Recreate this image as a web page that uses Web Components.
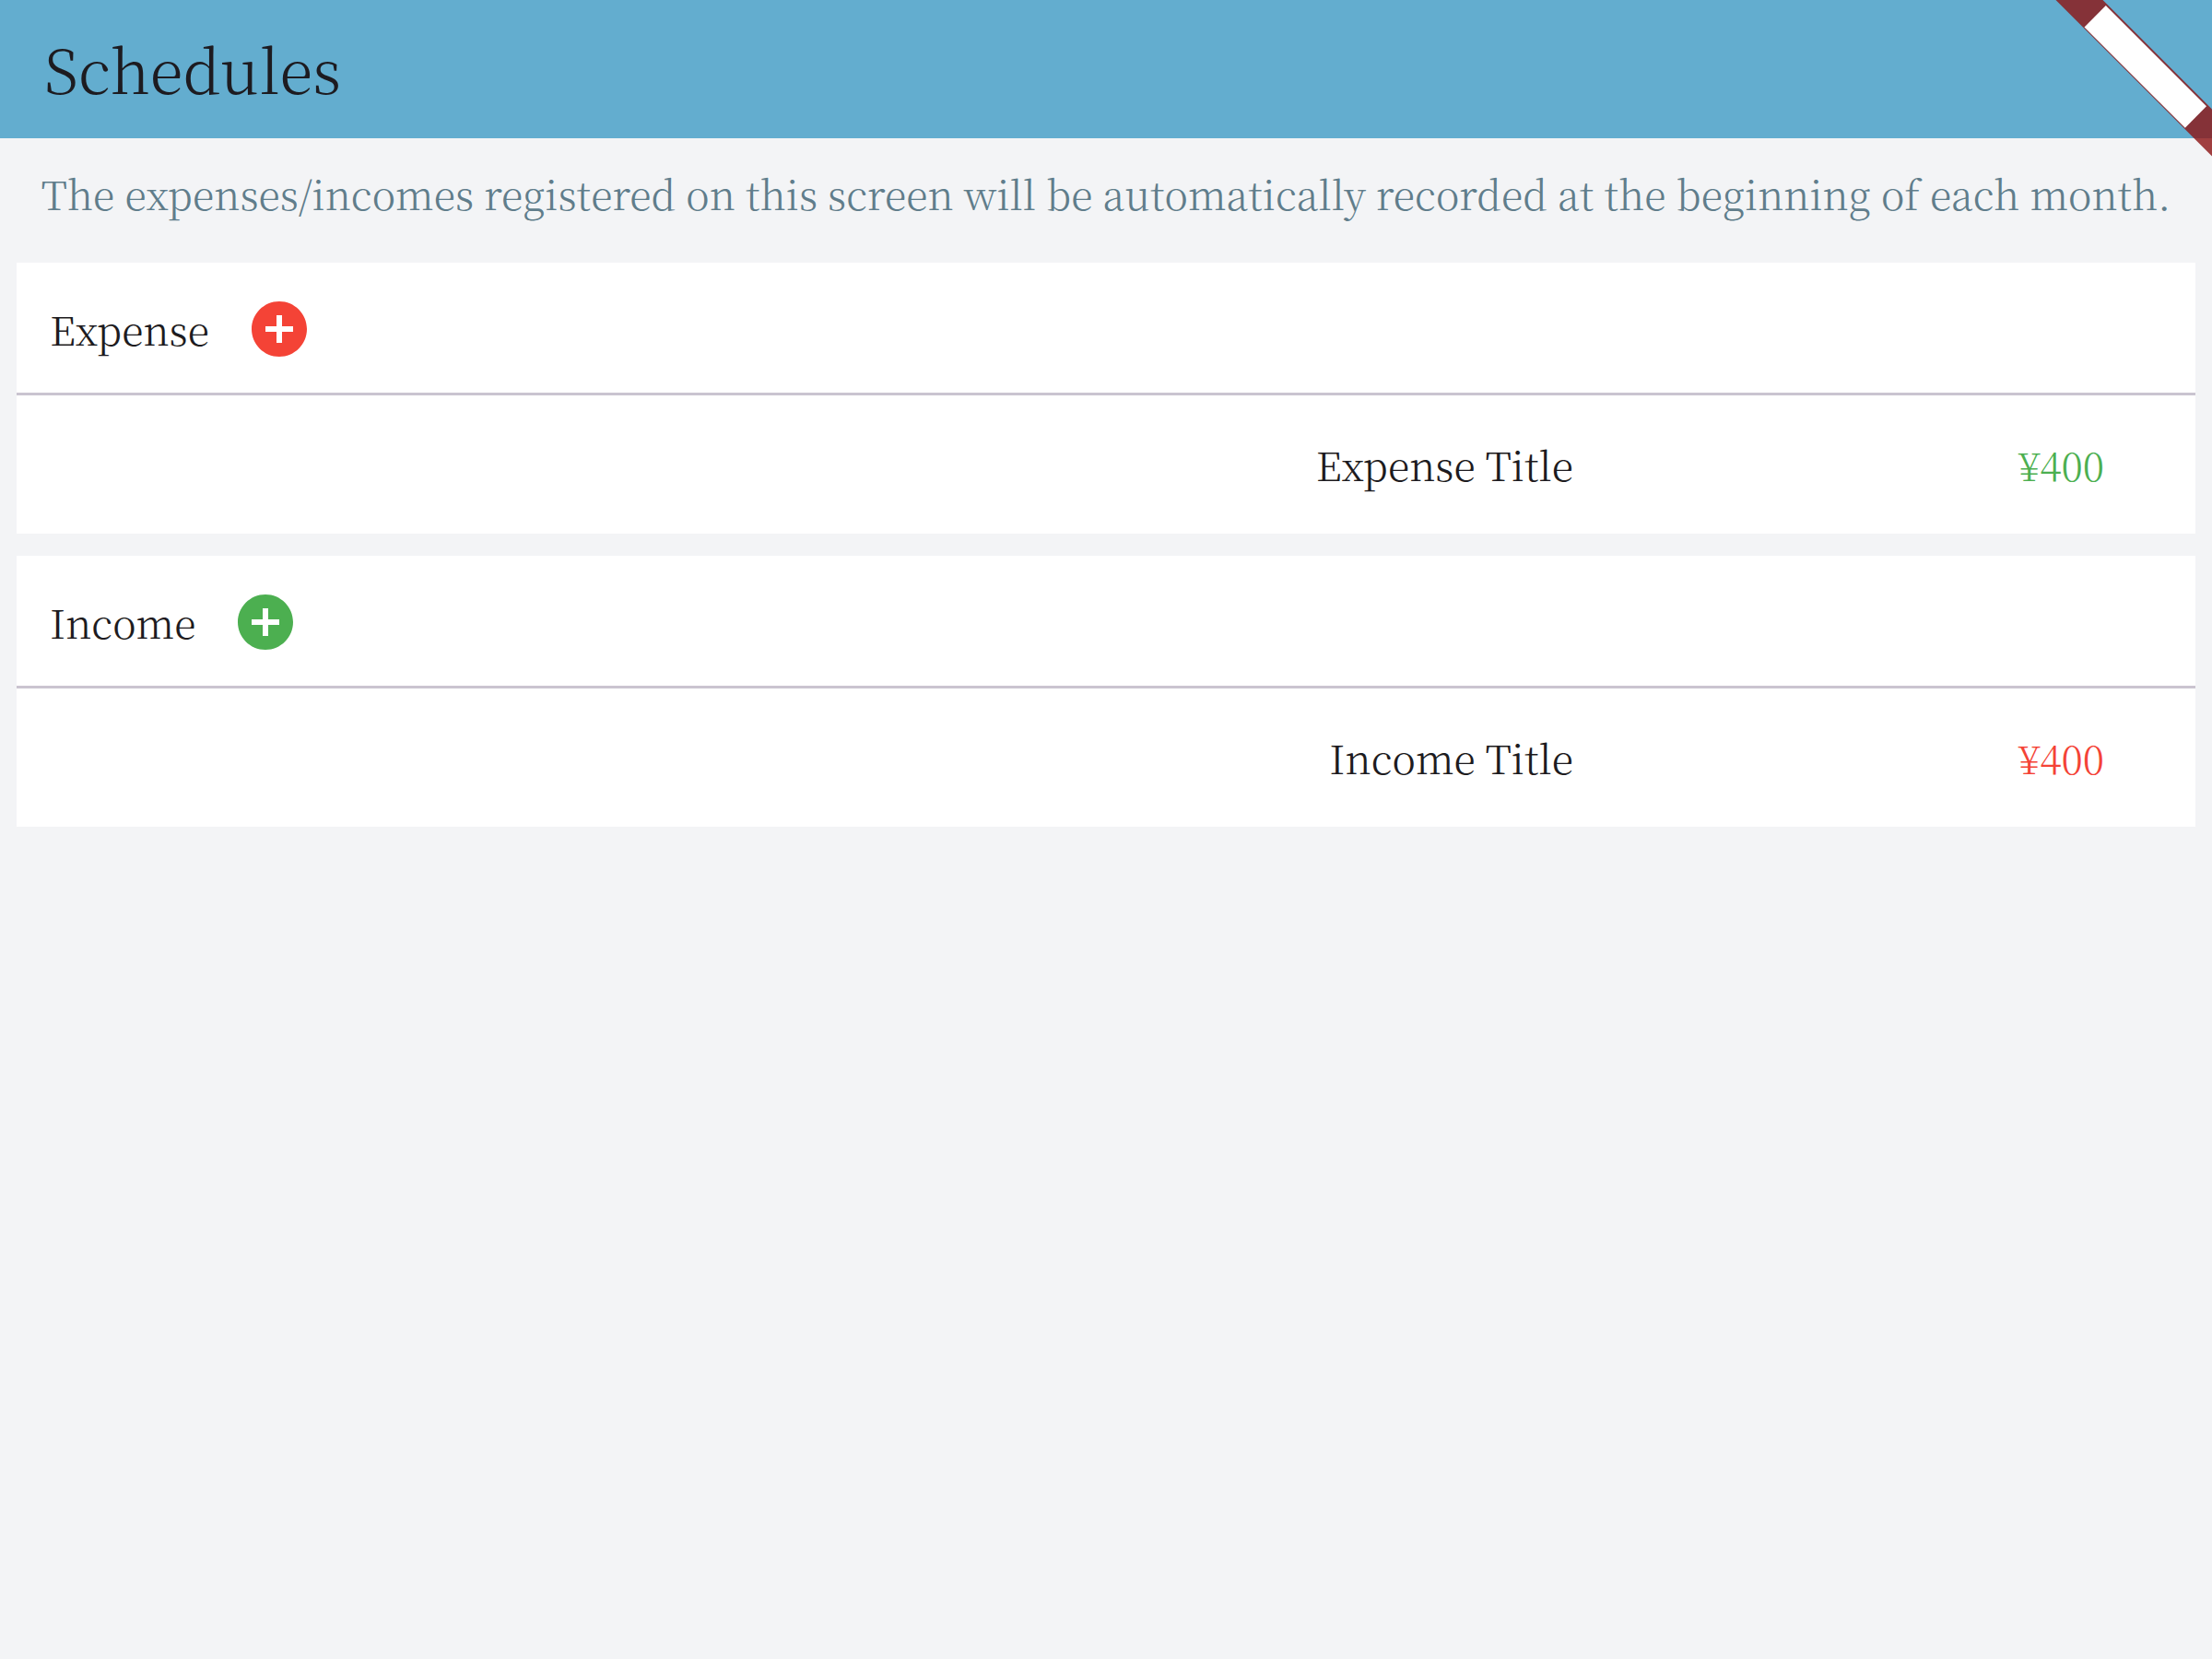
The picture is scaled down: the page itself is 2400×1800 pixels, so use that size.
<!DOCTYPE html>
<html lang="en">
<head>
<meta charset="utf-8">
<meta name="viewport" content="width=device-width, initial-scale=1">
<title>Schedules</title>
<style>
  html, body { margin: 0; min-height: 100%; background: #f3f4f6; }
  body {
    color: #1d1b20;
    font-family: "Noto Serif CJK JP", "Noto Serif JP", "Source Serif 4", "Liberation Serif", serif;
    font-size: 43px;
    font-weight: 300;
    line-height: 72px;
  }
</style>
</head>
<body>
<schedule-page>
  <app-bar slot="bar">Schedules</app-bar>
  <span slot="note">The expenses/incomes registered on this screen will be automatically recorded at the beginning of each month.</span>
  <schedule-card label="Expense" style="--accent:#f44336">
    <schedule-row style="--amount:#4caf50">Expense Title<span slot="amount">¥400</span></schedule-row>
  </schedule-card>
  <schedule-card label="Income" style="--accent:#4caf50">
    <schedule-row style="--amount:#f44336">Income Title<span slot="amount">¥400</span></schedule-row>
  </schedule-card>
</schedule-page>
<script>
  class BaseElement extends HTMLElement {
    constructor() {
      super();
      this.attachShadow({ mode: "open" }).innerHTML = this.constructor.markup;
    }
  }

  customElements.define("corner-ribbon", class extends BaseElement {
    static markup = `
      <style>
        :host { display: block; position: absolute; top: 0; right: 0; pointer-events: none; }
        svg { display: block; }
      </style>
      <svg width="180" height="180" viewBox="0 0 180 180" aria-hidden="true">
        <path d="M10.5 0H61.5L180 118.5V169.5Z" fill="rgb(141,22,22)" fill-opacity=".814"/>
        <path d="M64.8 6L174 115.3L150.8 138.8L41.5 29.5Z" fill="#fff"/>
      </svg>`;
  });

  customElements.define("app-bar", class extends BaseElement {
    static markup = `
      <style>
        :host { display: block; background: #63adcf; padding: 29px 48px 31px; }
        h1 { margin: 0; font-size: 66px; line-height: 90px; font-weight: inherit; }
      </style>
      <h1><slot></slot></h1>`;
  });

  customElements.define("schedule-page", class extends BaseElement {
    static markup = `
      <style>
        :host { display: block; position: relative; overflow: hidden; }
        p { margin: 0; padding: 24px 24px 39px; text-align: center; color: #607d8b; }
        main { display: flex; flex-direction: column; gap: 24px; padding: 0 18px 24px; }
      </style>
      <slot name="bar"></slot>
      <p><slot name="note"></slot></p>
      <main><slot></slot></main>
      <corner-ribbon></corner-ribbon>`;
  });

  customElements.define("add-button", class extends BaseElement {
    static markup = `
      <style>
        :host { display: block; }
        button { display: block; border: 0; padding: 0; background: none; color: var(--accent); cursor: pointer; }
        svg { display: block; width: 72px; height: 72px; }
      </style>
      <button type="button" aria-label="Add">
        <svg viewBox="0 0 24 24" aria-hidden="true">
          <path fill="currentColor" d="M12 2C6.48 2 2 6.48 2 12s4.48 10 10 10 10-4.48 10-10S17.52 2 12 2zm5 11h-4v4h-2v-4H7v-2h4V7h2v4h4v2z"/>
        </svg>
      </button>`;
  });

  customElements.define("schedule-card", class extends BaseElement {
    static markup = `
      <style>
        :host { display: block; background: #fff; }
        header { display: flex; align-items: center; gap: 40px; padding: 36px 36px 33px; border-bottom: 3px solid #cac4d0; }
        h2 { margin: 0; font-size: inherit; font-weight: inherit; }
      </style>
      <header><h2></h2><add-button></add-button></header>
      <slot></slot>`;
    connectedCallback() {
      this.shadowRoot.querySelector("h2").textContent = this.getAttribute("label");
    }
  });

  customElements.define("schedule-row", class extends BaseElement {
    static markup = `
      <style>
        :host { display: grid; grid-template-columns: 3fr 1fr; padding: 39px 30px; text-align: right; }
        div { padding-right: 69px; }
        .amount { color: var(--amount); }
      </style>
      <div><slot></slot></div>
      <div class="amount"><slot name="amount"></slot></div>`;
  });
</script>
</body>
</html>
